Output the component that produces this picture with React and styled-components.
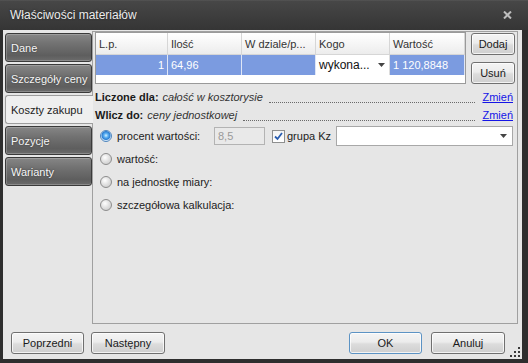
import React from "react"
import styled, { createGlobalStyle } from "styled-components"

const GlobalStyle = createGlobalStyle`
  html, body {
    margin: 0;
    padding: 0;
    background: #2e2e2e;
  }
  body {
    font-family: "Liberation Sans", Arial, sans-serif;
    font-size: 11px;
    -webkit-font-smoothing: antialiased;
  }
`

const Window = styled.div`
  width: 528px;
  height: 363px;
  display: flex;
  flex-direction: column;
  background: #2e2e2e;
`

const TitleBar = styled.div`
  height: 30px;
  flex: none;
  display: flex;
  align-items: center;
  justify-content: space-between;
  padding: 0 16px 0 10px;
  box-sizing: border-box;
  background: linear-gradient(#5a5a5a 0, #474747 1px, #3e3e3e 50%, #353535 100%);
  color: #ececec;
  font-size: 12px;
  text-shadow: 0 0 2px rgba(0, 0, 0, 0.6);
`

const Frame = styled.div`
  flex: 1;
  display: flex;
  padding: 0 6px 4px 3px;
  min-height: 0;
`

const Body = styled.div`
  flex: 1;
  display: flex;
  flex-direction: column;
  background: #e6e6e6;
`

const Main = styled.div`
  display: flex;
  height: 294px;
`

const TabList = styled.div`
  width: 89px;
  flex: none;
  display: flex;
  flex-direction: column;
  gap: 2px;
  padding: 3px 0 0 2px;
  box-sizing: border-box;
`

const Tab = styled.div`
  height: 29px;
  box-sizing: border-box;
  display: flex;
  align-items: center;
  padding-left: 5px;
  border-radius: 3px;
  position: relative;
  border: 1px solid ${(p) => (p.$active ? "#9d9d9d" : "#3a3a3a")};
  background: ${(p) =>
    p.$active
      ? "#efefef"
      : "linear-gradient(to bottom, #868686 0%, #727272 35%, #5e5e5e 80%, #6c6c6c 100%)"};
  box-shadow: ${(p) =>
    p.$active ? "none" : "inset 1px 1px 0 rgba(255,255,255,0.2), inset 0 -1px 0 rgba(255,255,255,0.22)"};
  color: ${(p) => (p.$active ? "#222" : "#f6f6f6")};
  text-shadow: ${(p) => (p.$active ? "none" : "0 0 2px rgba(0,0,0,0.5)")};
  ${(p) =>
    p.$active &&
    `
    border-right: none;
    border-radius: 3px 0 0 3px;
    margin-right: -1px;
    z-index: 1;
  `}
`

const Panel = styled.div`
  width: 426px;
  height: 293px;
  margin-top: 1px;
  box-sizing: border-box;
  border: 1px solid #a0a0a0;
  display: flex;
  flex-direction: column;
  padding: 0 1px 0 2px;
`

const GridArea = styled.div`
  display: flex;
  align-items: flex-start;
  gap: 5px;
`

const Grid = styled.div`
  width: 371px;
  height: 52px;
  box-sizing: border-box;
  border: 1px solid #9a9a9a;
  background: #fff;
  flex: none;
`

const GridRow = styled.div`
  display: grid;
  grid-template-columns: 72px 74px 74px 74px 1fr;
  height: ${(p) => (p.$header ? "21px" : "20px")};
  border-bottom: 1px solid ${(p) => (p.$header ? "#d6d6d6" : "#fff")};
`

const HeadCell = styled.div`
  display: flex;
  align-items: center;
  padding-left: 3px;
  border-right: 1px solid #d6d6d6;
  background: linear-gradient(#ffffff, #f4f4f4 60%, #ececec);
  color: #333;
`

const Cell = styled.div`
  display: flex;
  align-items: center;
  justify-content: ${(p) => (p.$right ? "flex-end" : "flex-start")};
  padding: 0 3px;
  border-right: 1px solid #dfe6f6;
  background: #7b9be0;
  color: #fff;
`

const ComboCell = styled.div`
  display: flex;
  align-items: center;
  justify-content: space-between;
  padding: 0 4px 0 3px;
  background: #fff;
  color: #111;
  border-right: 1px solid #dcdcdc;
  font-size: 12px;
`

const SideButtons = styled.div`
  display: flex;
  flex-direction: column;
  gap: 7px;
  padding-top: 1px;
`

const Button = styled.button`
  width: ${(p) => p.$w || 73}px;
  height: 22px;
  box-sizing: border-box;
  padding: 0;
  margin-left: ${(p) => p.$ml || 0}px;
  font-family: inherit;
  font-size: 11px;
  color: #1a1a1a;
  border: 1px solid ${(p) => (p.$default ? "#5c93c4" : "#707070")};
  border-radius: 3px;
  background: linear-gradient(#f4f4f4 0%, #ececec 45%, #dcdcdc 55%, #cfcfcf 100%);
  box-shadow: inset 0 0 0 1px rgba(255, 255, 255, 0.75);
`

const InfoRow = styled.div`
  display: flex;
  align-items: center;
  height: 18px;
  margin-top: ${(p) => p.$top || 0}px;
  color: #1a1a1a;
`

const Label = styled.b`
  font-weight: bold;
`

const Value = styled.i`
  color: #333;
  margin-left: 4px;
`

const Leader = styled.div`
  flex: 1;
  height: 0;
  margin: 10px 7px 0 6px;
  border-bottom: 1px dotted #6a6a6a;
`

const Link = styled.a`
  color: #1515e6;
  text-decoration: underline;
  margin-right: 3px;
`

const RadioGroup = styled.div`
  display: flex;
  flex-direction: column;
  gap: 3px;
  margin-top: 2px;
  padding-left: 5px;
`

const RadioRow = styled.div`
  display: flex;
  align-items: center;
  height: 20px;
  color: #222;
`

const Radio = styled.span`
  width: 12px;
  height: 12px;
  box-sizing: border-box;
  border-radius: 50%;
  flex: none;
  border: 1px solid ${(p) => (p.$checked ? "#4f86bd" : "#8d8d8d")};
  background: ${(p) =>
    p.$checked
      ? "radial-gradient(circle at 50% 45%, #d8f0ff 0, #5fb3f3 2px, #2d7fd4 4px, #cfe6fb 5px, #f2f8fd 6px)"
      : "radial-gradient(circle at 40% 35%, #ffffff 0, #e2e2e2 45%, #c4c4c4 100%)"};
`

const RadioText = styled.span`
  margin-left: 5px;
  width: ${(p) => (p.$w ? `${p.$w}px` : "auto")};
  flex: none;
`

const TextInput = styled.div`
  width: 51px;
  height: 18px;
  box-sizing: border-box;
  border: 1px solid #b3b3b3;
  background: #e9e9e9;
  color: #9a9a9a;
  padding-left: 3px;
  display: flex;
  align-items: center;
`

const Check = styled.span`
  width: 13px;
  height: 13px;
  box-sizing: border-box;
  border: 1px solid #8e8f8f;
  background: linear-gradient(#f4f4f4, #ffffff);
  margin-left: 7px;
  display: flex;
  align-items: center;
  justify-content: center;
`

const CheckText = styled.span`
  margin-left: 2px;
`

const Combo = styled.div`
  flex: 1;
  height: 20px;
  box-sizing: border-box;
  margin: 0 3px 0 5px;
  border: 1px solid #a8a8a8;
  background: #fff;
  display: flex;
  align-items: center;
  justify-content: flex-end;
  padding-right: 5px;
`

const BottomBar = styled.div`
  flex: 1;
  display: flex;
  align-items: flex-start;
  gap: 7px;
  padding: 8px 0 0 8px;
`

const Spacer = styled.div`
  flex: 1;
`

const Grip = styled.svg`
  align-self: flex-end;
  margin: 0 2px 2px -2px;
`

const Arrow = () => (
  <svg width="7" height="4" viewBox="0 0 7 4">
    <path d="M0 0H7L3.5 4Z" fill="#444" />
  </svg>
)

const tabs = ["Dane", "Szczegóły ceny", "Koszty zakupu", "Pozycje", "Warianty"]

export default function App() {
  return (
    <Window>
      <GlobalStyle />
      <TitleBar>
        <span>Właściwości materiałów</span>
        <svg width="9" height="8" viewBox="0 0 9 8">
          <path d="M1 0.5L8 7.5M8 0.5L1 7.5" stroke="#bdbdbd" strokeWidth="2" />
        </svg>
      </TitleBar>
      <Frame>
        <Body>
          <Main>
            <TabList>
              {tabs.map((t) => (
                <Tab key={t} $active={t === "Koszty zakupu"}>
                  {t}
                </Tab>
              ))}
            </TabList>
            <Panel>
              <GridArea>
                <Grid>
                  <GridRow $header>
                    <HeadCell>L.p.</HeadCell>
                    <HeadCell>Ilość</HeadCell>
                    <HeadCell>W dziale/p...</HeadCell>
                    <HeadCell>Kogo</HeadCell>
                    <HeadCell>Wartość</HeadCell>
                  </GridRow>
                  <GridRow>
                    <Cell $right>1</Cell>
                    <Cell>64,96</Cell>
                    <Cell />
                    <ComboCell>
                      <span>wykona...</span>
                      <Arrow />
                    </ComboCell>
                    <Cell>1 120,8848</Cell>
                  </GridRow>
                </Grid>
                <SideButtons>
                  <Button $w={44}>Dodaj</Button>
                  <Button $w={44}>Usuń</Button>
                </SideButtons>
              </GridArea>

              <InfoRow $top={4}>
                <Label>Liczone dla:</Label>
                <Value>całość w kosztorysie</Value>
                <Leader />
                <Link>Zmień</Link>
              </InfoRow>
              <InfoRow>
                <Label>Wlicz do:</Label>
                <Value>ceny jednostkowej</Value>
                <Leader />
                <Link>Zmień</Link>
              </InfoRow>

              <RadioGroup>
                <RadioRow>
                  <Radio $checked />
                  <RadioText $w={97}>procent wartości:</RadioText>
                  <TextInput>8,5</TextInput>
                  <Check>
                    <svg width="9" height="9" viewBox="0 0 9 9">
                      <path d="M1 4.5L3.5 7L8 1" stroke="#2a5db0" strokeWidth="1.8" fill="none" />
                    </svg>
                  </Check>
                  <CheckText>grupa Kz</CheckText>
                  <Combo>
                    <Arrow />
                  </Combo>
                </RadioRow>
                <RadioRow>
                  <Radio />
                  <RadioText>wartość:</RadioText>
                </RadioRow>
                <RadioRow>
                  <Radio />
                  <RadioText>na jednostkę miary:</RadioText>
                </RadioRow>
                <RadioRow>
                  <Radio />
                  <RadioText>szczegółowa kalkulacja:</RadioText>
                </RadioRow>
              </RadioGroup>
            </Panel>
          </Main>
          <BottomBar>
            <Button $w={73}>Poprzedni</Button>
            <Button $w={74}>Następny</Button>
            <Spacer />
            <Button $w={73} $default>
              OK
            </Button>
            <Button $w={74} $ml={2}>
              Anuluj
            </Button>
            <Grip width="10" height="10" viewBox="0 0 10 10">
              <rect x="8" y="0" width="2" height="2" fill="#3a3a3a" />
              <rect x="4" y="4" width="2" height="2" fill="#3a3a3a" />
              <rect x="8" y="4" width="2" height="2" fill="#3a3a3a" />
              <rect x="0" y="8" width="2" height="2" fill="#3a3a3a" />
              <rect x="4" y="8" width="2" height="2" fill="#3a3a3a" />
              <rect x="8" y="8" width="2" height="2" fill="#3a3a3a" />
            </Grip>
          </BottomBar>
        </Body>
      </Frame>
    </Window>
  )
}
